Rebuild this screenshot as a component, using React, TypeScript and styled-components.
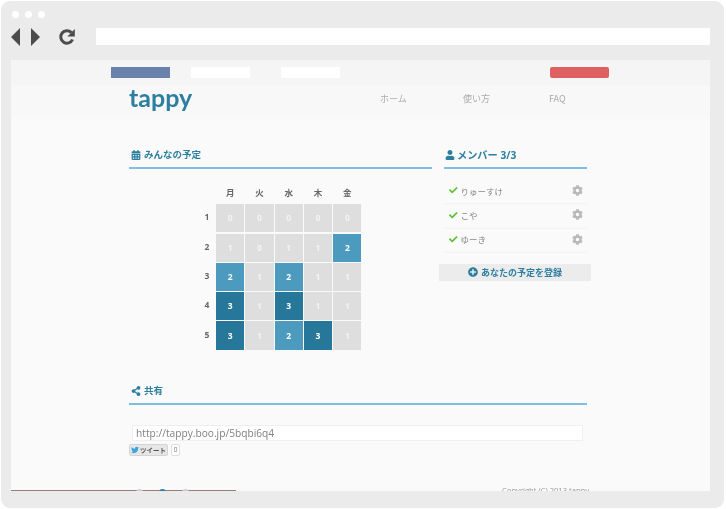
import React from "react";
import styled, { createGlobalStyle } from "styled-components";
import { FaCalendarAlt, FaCheck, FaCog, FaPlusCircle, FaShareAlt, FaTwitter, FaUser } from "react-icons/fa";

const GlobalStyle = createGlobalStyle`
  html, body {
    margin: 0;
    padding: 0;
    background: #fff;
  }
  body {
    font-family: "Open Sans", "Noto Sans CJK JP", sans-serif;
  }
`;

const Chrome = styled.div`
  box-sizing: border-box;
  width: 723px;
  height: 507px;
  margin: 1px 0 0 1px;
  padding: 10px 14px 16px 10px;
  background: #ebebeb;
  border-radius: 9px;
  display: flex;
  flex-direction: column;
`;

const Dots = styled.div`
  display: flex;
  gap: 6px;
  margin-left: 1px;
  height: 7px;
`;

const Dot = styled.span`
  width: 7px;
  height: 7px;
  border-radius: 50%;
  background: #fff;
`;

const Toolbar = styled.div`
  display: flex;
  align-items: center;
  height: 17px;
  margin-top: 10px;
`;

const NavArrows = styled.svg`
  width: 29px;
  height: 18px;
  margin-right: 18px;
  fill: #4c4c4c;
`;

const Reload = styled.svg`
  width: 18px;
  height: 18px;
  margin-right: 20px;
`;

const AddressBar = styled.div`
  flex: 1;
  height: 17px;
  background: #fff;
`;

const Viewport = styled.div`
  margin-top: 15px;
  height: 431px;
  overflow: hidden;
  background: #fafafa;
  filter: blur(0.3px);
`;

const TopBar = styled.div`
  box-sizing: border-box;
  height: 25px;
  padding: 7px 0 0 100px;
  display: flex;
  background: #f5f5f5;
`;

const TopButton = styled.div<{ $color: string; $gap: number; $round?: boolean }>`
  width: 59px;
  height: 11px;
  margin-right: ${(p) => p.$gap}px;
  background: ${(p) => p.$color};
  border-radius: ${(p) => (p.$round ? "2px" : "0")};
`;

const Header = styled.header`
  box-sizing: border-box;
  height: 32px;
  padding-left: 118px;
  display: flex;
  align-items: center;
  background: #f8f8f8;
`;

const Logo = styled.div`
  width: 251px;
  font: 700 25px/26px Lato, sans-serif;
  color: #2d7f9f;
  position: relative;
  top: -4px;
`;

const NavItem = styled.a<{ $width: number }>`
  width: ${(p) => p.$width}px;
  font: 400 9px/14px "Noto Sans CJK JP", sans-serif;
  color: #aaa;
  position: relative;
  top: -2px;
`;

const Content = styled.main`
  width: 458px;
  margin-left: 118px;
  padding-top: 26px;
`;

const Columns = styled.div`
  display: flex;
  justify-content: space-between;
`;

const LeftColumn = styled.section`
  width: 303px;
`;

const RightColumn = styled.section`
  width: 143px;
`;

const SectionTitle = styled.h2`
  box-sizing: border-box;
  height: 26px;
  margin: 0;
  padding: 0 0 0 2px;
  display: flex;
  align-items: center;
  gap: 3px;
  font: 700 9.5px/14px "Open Sans", "Noto Sans CJK JP", sans-serif;
  color: #2d7f9f;
  border-bottom: 2px solid #7fbde3;
  svg {
    font-size: 10px;
    flex: none;
  }
`;

const MemberTitle = styled(SectionTitle)`
  padding-left: 1px;
  gap: 2px;
  font-size: 10.2px;
`;

const Schedule = styled.div`
  display: grid;
  grid-template-columns: 20px repeat(5, 28.2px);
  grid-auto-rows: 28.2px;
  gap: 1.1px;
  width: max-content;
  margin: 6px 0 0 66px;
`;

const DayLabel = styled.div`
  display: flex;
  align-items: center;
  justify-content: center;
  height: 18px;
  align-self: end;
  margin-bottom: 2px;
  font: 700 8.5px/12px "Noto Sans CJK JP", sans-serif;
  color: #666;
`;

const RowLabel = styled.div`
  display: flex;
  align-items: center;
  justify-content: center;
  font: 700 8.5px/12px "Open Sans", sans-serif;
  color: #666;
  position: relative;
  left: 2px;
  top: -1px;
`;

const cellColors: Record<number, string> = {
  0: "#dedede",
  1: "#dedede",
  2: "#4c9bbf",
  3: "#27779b",
};

const Cell = styled.div<{ $count: number }>`
  display: flex;
  align-items: center;
  justify-content: center;
  background: ${(p) => cellColors[p.$count]};
  color: ${(p) => (p.$count > 1 ? "#fff" : "#f3f3f3")};
  font: 700 8.5px/12px "Open Sans", sans-serif;
`;

const MemberList = styled.ul`
  list-style: none;
  margin: 0;
  padding: 11px 0 0;
`;

const MemberRow = styled.li`
  box-sizing: border-box;
  height: 24.3px;
  padding: 0 4px 2px 5px;
  display: flex;
  align-items: center;
  gap: 3px;
  font: 400 8.5px/12px "Noto Sans CJK JP", sans-serif;
  color: #888;
  border-bottom: 1px solid #f3f3f3;
`;

const CheckIcon = styled(FaCheck)`
  color: #5cc234;
  font-size: 8.5px;
`;

const GearIcon = styled(FaCog)`
  margin-left: auto;
  color: #b9b9b9;
  font-size: 11px;
`;

const RegisterButton = styled.button`
  box-sizing: border-box;
  display: flex;
  align-items: center;
  justify-content: center;
  gap: 3px;
  width: 152px;
  height: 17px;
  margin: 11px 0 0 -5px;
  padding: 0;
  border: none;
  background: #ececec;
  color: #2d7f9f;
  font: 700 9px/13px "Open Sans", "Noto Sans CJK JP", sans-serif;
  svg {
    font-size: 10px;
  }
`;

const ShareSection = styled.section`
  margin-top: 29px;
`;

const UrlBox = styled.div`
  box-sizing: border-box;
  width: 451px;
  height: 16px;
  margin: 20px 0 0 3px;
  padding-left: 3px;
  background: #fff;
  border: 1px solid #efefef;
  font: 400 10.2px/14px "Open Sans", sans-serif;
  color: #808080;
`;

const TweetRow = styled.div`
  display: flex;
  align-items: center;
  gap: 3px;
  margin-top: 3px;
`;

const TweetButton = styled.div`
  box-sizing: border-box;
  width: 39px;
  height: 12px;
  display: flex;
  align-items: center;
  justify-content: center;
  gap: 1px;
  background: #e6e6e6;
  border: 1px solid #d4d4d4;
  border-radius: 2px;
  font: 700 6.5px/10px "Noto Sans CJK JP", sans-serif;
  color: #555;
  svg {
    color: #3aa6e0;
    font-size: 8px;
  }
`;

const TweetCount = styled.div`
  box-sizing: border-box;
  width: 9px;
  height: 12px;
  border: 1px solid #ddd;
  border-radius: 2px;
  background: #fff;
  font: 400 6.5px/10px "Open Sans", sans-serif;
  color: #777;
  text-align: center;
`;

const Footer = styled.footer`
  display: flex;
  align-items: flex-start;
  justify-content: space-between;
  height: 60px;
  margin: 28px -123px 0 -118px;
  padding-right: 121px;
  position: relative;
`;

const FooterRule = styled.div`
  position: absolute;
  left: 0;
  top: 6px;
  width: 225px;
  height: 1px;
  background: #9a7c78;
`;

const FooterDots = styled.div`
  position: relative;
  display: flex;
  gap: 16px;
  margin: 5px 0 0 125px;
`;

const FooterDot = styled.span<{ $active?: boolean }>`
  width: 7px;
  height: 7px;
  border-radius: 50%;
  background: ${(p) => (p.$active ? "#2d7f9f" : "#cfcfcf")};
`;

const Copyright = styled.div`
  font: 400 7.6px/12px "Open Sans", sans-serif;
  color: #999;
`;

const days = ["月", "火", "水", "木", "金"];
const rows = [
  [0, 0, 0, 0, 0],
  [1, 0, 1, 1, 2],
  [2, 1, 2, 1, 1],
  [3, 1, 3, 1, 1],
  [3, 1, 2, 3, 1],
];
const members = ["りゅーすけ", "こや", "ゆーき"];

const App = () => (
  <>
    <GlobalStyle />
    <Chrome>
      <Dots>
        <Dot />
        <Dot />
        <Dot />
      </Dots>
      <Toolbar>
        <NavArrows viewBox="0 0 29 18">
          <path d="M0 9 9 0v18zM20 0l9 9-9 9z" />
        </NavArrows>
        <Reload viewBox="0 0 18 18">
          <path d="M14.6 11.5A6.2 6.2 0 1 1 13.4 4.6" fill="none" stroke="#4c4c4c" strokeWidth="3" />
          <path d="M16.8 1v7.4H9.4z" fill="#4c4c4c" />
        </Reload>
        <AddressBar />
      </Toolbar>
      <Viewport>
        <TopBar>
          <TopButton $color="#6a82ab" $gap={21} />
          <TopButton $color="#fff" $gap={31} />
          <TopButton $color="#fff" $gap={210} />
          <TopButton $color="#de6060" $gap={0} $round />
        </TopBar>
        <Header>
          <Logo>tappy</Logo>
          <NavItem $width={83}>ホーム</NavItem>
          <NavItem $width={86}>使い方</NavItem>
          <NavItem $width={30}>FAQ</NavItem>
        </Header>
        <Content>
          <Columns>
            <LeftColumn>
              <SectionTitle>
                <FaCalendarAlt />
                みんなの予定
              </SectionTitle>
              <Schedule>
                <span />
                {days.map((day) => (
                  <DayLabel key={day}>{day}</DayLabel>
                ))}
                {rows.map((row, i) => (
                  <React.Fragment key={i}>
                    <RowLabel>{i + 1}</RowLabel>
                    {row.map((count, j) => (
                      <Cell key={j} $count={count}>
                        {count}
                      </Cell>
                    ))}
                  </React.Fragment>
                ))}
              </Schedule>
            </LeftColumn>
            <RightColumn>
              <MemberTitle>
                <FaUser />
                メンバー 3/3
              </MemberTitle>
              <MemberList>
                {members.map((name) => (
                  <MemberRow key={name}>
                    <CheckIcon />
                    {name}
                    <GearIcon />
                  </MemberRow>
                ))}
              </MemberList>
              <RegisterButton>
                <FaPlusCircle />
                あなたの予定を登録
              </RegisterButton>
            </RightColumn>
          </Columns>
          <ShareSection>
            <SectionTitle>
              <FaShareAlt />
              共有
            </SectionTitle>
            <UrlBox>http://tappy.boo.jp/5bqbi6q4</UrlBox>
            <TweetRow>
              <TweetButton>
                <FaTwitter />
                ツイート
              </TweetButton>
              <TweetCount>0</TweetCount>
            </TweetRow>
          </ShareSection>
          <Footer>
            <FooterRule />
            <FooterDots>
              <FooterDot />
              <FooterDot $active />
              <FooterDot />
            </FooterDots>
            <Copyright>Copyright (C) 2013 tappy</Copyright>
          </Footer>
        </Content>
      </Viewport>
    </Chrome>
  </>
);

export default App;
